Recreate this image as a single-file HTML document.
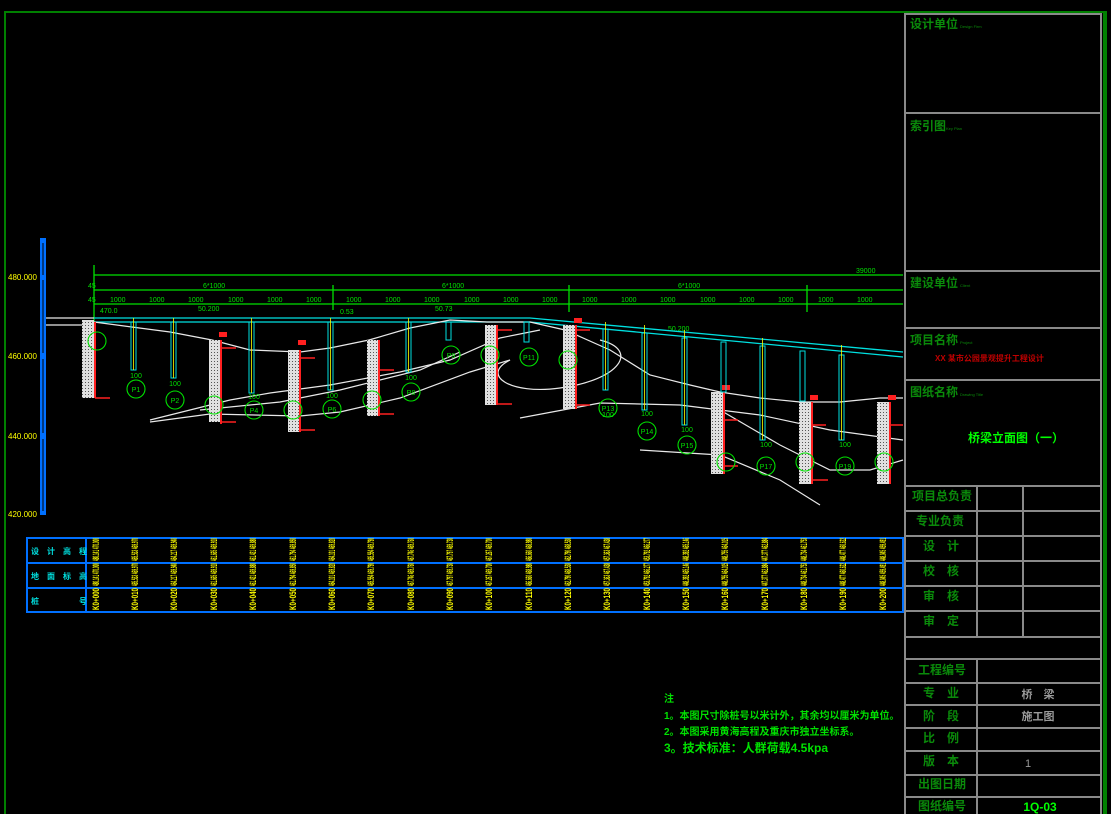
<!DOCTYPE html>
<html><head><meta charset="utf-8"><style>
html,body{margin:0;padding:0;background:#000;width:1111px;height:814px;overflow:hidden}
svg{display:block}
text{font-family:"Liberation Sans","Noto Sans CJK SC",sans-serif}
.cj{font-family:"Liberation Sans","Noto Sans CJK SC",sans-serif;font-weight:bold}
</style></head><body>
<svg width="1111" height="814" viewBox="0 0 1111 814" xmlns="http://www.w3.org/2000/svg">
<defs>
<pattern id="dots" width="3" height="3" patternUnits="userSpaceOnUse"><rect width="3" height="3" fill="#e0e0e0"/><rect x="1" y="1" width="1" height="1" fill="#555"/></pattern>
</defs>
<rect width="1111" height="814" fill="#000"/>
<path d="M5 814 V12 H1106 V814" fill="none" stroke="#008000" stroke-width="2"/>

<g stroke="#8a8a8a" stroke-width="2" fill="none">
<rect x="905" y="14" width="196" height="802"/>
<line x1="905" y1="113" x2="1101" y2="113"/>
<line x1="905" y1="271" x2="1101" y2="271"/>
<line x1="905" y1="328" x2="1101" y2="328"/>
<line x1="905" y1="380" x2="1101" y2="380"/>
<line x1="905" y1="486" x2="1101" y2="486"/>
<line x1="905" y1="511" x2="1101" y2="511"/>
<line x1="905" y1="536" x2="1101" y2="536"/>
<line x1="905" y1="561" x2="1101" y2="561"/>
<line x1="905" y1="586" x2="1101" y2="586"/>
<line x1="905" y1="611" x2="1101" y2="611"/>
<line x1="905" y1="637" x2="1101" y2="637"/>
<line x1="905" y1="659" x2="1101" y2="659"/>
<line x1="905" y1="683" x2="1101" y2="683"/>
<line x1="905" y1="705" x2="1101" y2="705"/>
<line x1="905" y1="728" x2="1101" y2="728"/>
<line x1="905" y1="751" x2="1101" y2="751"/>
<line x1="905" y1="775" x2="1101" y2="775"/>
<line x1="905" y1="797" x2="1101" y2="797"/>
<line x1="977" y1="486" x2="977" y2="637"/>
<line x1="1023" y1="486" x2="1023" y2="637"/>
<line x1="977" y1="659" x2="977" y2="814"/>
</g>
<line x1="1104" y1="12" x2="1104" y2="814" stroke="#008000" stroke-width="2"/>
<g fill="#0a8a0a" class="cj" font-size="12">
<text x="910" y="28">设计单位</text>
<text x="910" y="130">索引图</text>
<text x="910" y="287">建设单位</text>
<text x="910" y="344">项目名称</text>
<text x="910" y="396">图纸名称</text>
<text x="912" y="500">项目总负责</text>
<text x="916" y="525">专业负责</text>
<text x="923" y="550">设　计</text>
<text x="923" y="575">校　核</text>
<text x="923" y="600">审　核</text>
<text x="923" y="625">审　定</text>
<text x="918" y="674">工程编号</text>
<text x="923" y="697">专　业</text>
<text x="923" y="720">阶　段</text>
<text x="923" y="742">比　例</text>
<text x="923" y="765">版　本</text>
<text x="918" y="788">出图日期</text>
<text x="918" y="810">图纸编号</text>
</g>
<g fill="#0a8a0a" font-size="4">
<text x="960" y="28">Design Firm</text><text x="946" y="130">Key Plan</text><text x="960" y="287">Client</text><text x="960" y="344">Project</text><text x="960" y="396">Drawing Title</text>
</g>
<text x="935" y="361" fill="#c00000" font-size="8" class="cj">XX 某市公园景观提升工程设计</text>
<text x="968" y="442" fill="#00ff00" font-size="12" class="cj">桥梁立面图（一）</text>
<g fill="#9a9a9a" font-size="11" class="cj" text-anchor="middle">
<text x="1038" y="698">桥　梁</text><text x="1038" y="720">施工图</text><text x="1028" y="767" font-weight="normal">1</text>
</g>
<text x="1040" y="811" fill="#00ff00" font-size="12" font-weight="bold" text-anchor="middle">1Q-03</text>

<rect x="40" y="238" width="6" height="277" fill="#0070ff"/>
<g stroke="#000" stroke-width="1"><line x1="43" y1="243" x2="43" y2="275"/><line x1="43" y1="280" x2="43" y2="353"/><line x1="43" y1="359" x2="43" y2="433"/><line x1="43" y1="439" x2="43" y2="511"/></g>
<g fill="#ffff00" font-size="8">
<text x="8" y="280">480.000</text><text x="8" y="359">460.000</text><text x="8" y="439">440.000</text><text x="8" y="517">420.000</text>
</g>

<g stroke="#00e000" stroke-width="1.3" fill="none">
<line x1="94" y1="265" x2="94" y2="330"/>
<line x1="94" y1="275" x2="903" y2="275"/>
<line x1="94" y1="290" x2="903" y2="290"/>
<line x1="94" y1="304" x2="903" y2="304"/>
<line x1="333" y1="285" x2="333" y2="310"/>
<line x1="569" y1="285" x2="569" y2="312"/>
<line x1="807" y1="285" x2="807" y2="312"/>
</g>
<g fill="#00e000" font-size="7">
<text x="203" y="288">6*1000</text><text x="442" y="288">6*1000</text><text x="678" y="288">6*1000</text><text x="856" y="273">39000</text>
<text x="88" y="288">45</text><text x="88" y="302">45</text>
<text x="110" y="302">1000</text><text x="149" y="302">1000</text><text x="188" y="302">1000</text><text x="228" y="302">1000</text><text x="267" y="302">1000</text><text x="306" y="302">1000</text><text x="346" y="302">1000</text><text x="385" y="302">1000</text><text x="424" y="302">1000</text><text x="464" y="302">1000</text><text x="503" y="302">1000</text><text x="542" y="302">1000</text><text x="582" y="302">1000</text><text x="621" y="302">1000</text><text x="660" y="302">1000</text><text x="700" y="302">1000</text><text x="739" y="302">1000</text><text x="778" y="302">1000</text><text x="818" y="302">1000</text><text x="857" y="302">1000</text>
<text x="100" y="313">470.0</text><text x="198" y="311">50.200</text><text x="340" y="314">0.53</text><text x="435" y="311">50.73</text><text x="668" y="331">50.200</text>
</g>

<g stroke="#00e0e0" stroke-width="1.3" fill="none">
<polyline points="94,318 530,318 903,352"/>
<polyline points="94,322 530,322 903,357"/>
</g>
<g stroke="#e8e8e8" stroke-width="1.2" fill="none">
<polyline points="46,318 94,318"/><polyline points="46,325 94,325"/>
<polyline points="94,322 170,332 212,340 250,350 300,352 330,348 369,340 410,328 450,320 487,322 530,322 565,330 610,350 650,375 690,385 720,392 760,398 800,402 840,402 880,398 903,398"/>
<polyline points="150,420 190,410 230,400 270,393 330,385 400,372 450,360 500,338 540,330"/>
<polyline points="200,410 280,402 340,390 380,380 420,370 460,352"/>
<polyline points="150,422 210,414 300,416 340,412 400,398 470,372 510,360"/>
<path d="M510,360 C480,375 510,395 560,388 C620,380 640,350 600,340"/>
<polyline points="520,418 600,403 680,405 760,415 830,430 903,440"/>
<polyline points="640,450 720,455 780,480 820,505"/>
<polyline points="720,410 780,445 830,470 870,470 903,460"/>
</g>

<g fill="url(#dots)"><rect x="82" y="320" width="12" height="78"/><rect x="209" y="340" width="11" height="82"/><rect x="288" y="350" width="11" height="82"/><rect x="367" y="340" width="11" height="76"/><rect x="485" y="325" width="11" height="80"/><rect x="563" y="325" width="12" height="84"/><rect x="711" y="392" width="12" height="82"/><rect x="799" y="402" width="12" height="82"/><rect x="877" y="402" width="12" height="82"/></g>
<g stroke="#ff2020" stroke-width="2"><line x1="95" y1="322" x2="95" y2="398"/><line x1="221" y1="340" x2="221" y2="424"/><line x1="300" y1="350" x2="300" y2="432"/><line x1="379" y1="340" x2="379" y2="416"/><line x1="497" y1="325" x2="497" y2="405"/><line x1="576" y1="325" x2="576" y2="409"/><line x1="724" y1="392" x2="724" y2="474"/><line x1="812" y1="402" x2="812" y2="484"/><line x1="890" y1="402" x2="890" y2="484"/></g>
<g stroke="#ff2020" stroke-width="1.5"><line x1="95" y1="398" x2="110" y2="398"/><line x1="221" y1="348" x2="236" y2="348"/><line x1="221" y1="422" x2="236" y2="422"/><line x1="300" y1="358" x2="315" y2="358"/><line x1="300" y1="430" x2="315" y2="430"/><line x1="379" y1="370" x2="394" y2="370"/><line x1="379" y1="414" x2="394" y2="414"/><line x1="497" y1="330" x2="512" y2="330"/><line x1="497" y1="404" x2="512" y2="404"/><line x1="576" y1="330" x2="590" y2="330"/><line x1="576" y1="405" x2="590" y2="405"/><line x1="724" y1="420" x2="738" y2="420"/><line x1="724" y1="466" x2="738" y2="466"/><line x1="812" y1="425" x2="826" y2="425"/><line x1="812" y1="480" x2="828" y2="480"/><line x1="890" y1="425" x2="903" y2="425"/></g>
<g fill="#ff2020"><rect x="219" y="332" width="8" height="5"/><rect x="298" y="340" width="8" height="5"/><rect x="574" y="318" width="8" height="5"/><rect x="722" y="385" width="8" height="5"/><rect x="810" y="395" width="8" height="5"/><rect x="888" y="395" width="8" height="5"/></g>
<g stroke="#00e0e0" stroke-width="1" fill="none">
<rect x="131" y="322" width="5" height="48"/><rect x="171" y="322" width="5" height="56"/><rect x="249" y="322" width="5" height="71"/><rect x="328" y="322" width="5" height="68"/><rect x="406" y="322" width="5" height="50"/><rect x="446" y="322" width="5" height="18"/><rect x="524" y="322" width="5" height="20"/><rect x="603" y="329" width="5" height="61"/><rect x="642" y="333" width="5" height="77"/><rect x="682" y="338" width="5" height="87"/><rect x="760" y="346" width="5" height="94"/><rect x="839" y="355" width="5" height="85"/><rect x="800" y="351" width="5" height="50"/><rect x="721" y="342" width="5" height="50"/>
</g>
<g stroke="#ffff00" stroke-width="0.8"><line x1="133.5" y1="318" x2="133.5" y2="370"/><line x1="173.5" y1="318" x2="173.5" y2="378"/><line x1="251.5" y1="318" x2="251.5" y2="393"/><line x1="330.5" y1="318" x2="330.5" y2="390"/><line x1="408.5" y1="318" x2="408.5" y2="372"/><line x1="605.5" y1="322" x2="605.5" y2="390"/><line x1="644.5" y1="325" x2="644.5" y2="410"/><line x1="684.5" y1="330" x2="684.5" y2="425"/><line x1="762.5" y1="338" x2="762.5" y2="440"/><line x1="841.5" y1="345" x2="841.5" y2="440"/></g>
<g stroke="#00e000" stroke-width="1.1" fill="none">
<circle cx="97" cy="341" r="9"/><circle cx="136" cy="389" r="9"/><circle cx="175" cy="400" r="9"/><circle cx="214" cy="405" r="9"/><circle cx="254" cy="410" r="9"/><circle cx="293" cy="410" r="9"/><circle cx="332" cy="409" r="9"/><circle cx="372" cy="400" r="9"/><circle cx="411" cy="392" r="9"/><circle cx="451" cy="355" r="9"/><circle cx="490" cy="355" r="9"/><circle cx="529" cy="357" r="9"/><circle cx="568" cy="360" r="9"/><circle cx="608" cy="408" r="9"/><circle cx="647" cy="431" r="9"/><circle cx="687" cy="445" r="9"/><circle cx="726" cy="462" r="9"/><circle cx="766" cy="466" r="9"/><circle cx="805" cy="462" r="9"/><circle cx="845" cy="466" r="9"/><circle cx="884" cy="462" r="9"/>
</g>
<g fill="#00e000" font-size="7" text-anchor="middle">
<text x="136" y="392">P1</text><text x="175" y="403">P2</text><text x="254" y="413">P4</text><text x="332" y="412">P6</text><text x="411" y="395">P8</text><text x="451" y="358">P9</text><text x="529" y="360">P11</text><text x="608" y="411">P13</text><text x="647" y="434">P14</text><text x="687" y="448">P15</text><text x="766" y="469">P17</text><text x="845" y="469">P19</text>
<text x="136" y="378">100</text><text x="175" y="386">100</text><text x="254" y="399">100</text><text x="332" y="398">100</text><text x="411" y="380">100</text><text x="608" y="417">100</text><text x="647" y="416">100</text><text x="687" y="432">100</text><text x="766" y="447">100</text><text x="845" y="447">100</text>
</g>

<g stroke="#0070ff" stroke-width="2" fill="none">
<rect x="27" y="538" width="876" height="74"/>
<line x1="27" y1="563" x2="903" y2="563"/><line x1="27" y1="588" x2="903" y2="588"/>
<line x1="86" y1="538" x2="86" y2="612"/>
</g>
<g fill="#00e0e0" font-size="8" class="cj">
<text x="31" y="554">设　计　高　程</text><text x="31" y="579">地　面　标　高</text><text x="31" y="604">桩　　　　　号</text>
</g>
<g fill="#ffff00" font-size="9" font-weight="bold">
<text transform="translate(99,561) rotate(-90)" textLength="23" lengthAdjust="spacingAndGlyphs">480.141 470.000</text>
<text transform="translate(138,561) rotate(-90)" textLength="23" lengthAdjust="spacingAndGlyphs">465.533 469.970</text>
<text transform="translate(177,561) rotate(-90)" textLength="23" lengthAdjust="spacingAndGlyphs">464.217 469.940</text>
<text transform="translate(217,561) rotate(-90)" textLength="23" lengthAdjust="spacingAndGlyphs">461.665 469.910</text>
<text transform="translate(256,561) rotate(-90)" textLength="23" lengthAdjust="spacingAndGlyphs">461.431 469.880</text>
<text transform="translate(296,561) rotate(-90)" textLength="23" lengthAdjust="spacingAndGlyphs">461.794 469.850</text>
<text transform="translate(335,561) rotate(-90)" textLength="23" lengthAdjust="spacingAndGlyphs">464.101 469.820</text>
<text transform="translate(374,561) rotate(-90)" textLength="23" lengthAdjust="spacingAndGlyphs">465.554 469.790</text>
<text transform="translate(414,561) rotate(-90)" textLength="23" lengthAdjust="spacingAndGlyphs">467.746 469.760</text>
<text transform="translate(453,561) rotate(-90)" textLength="23" lengthAdjust="spacingAndGlyphs">467.797 469.730</text>
<text transform="translate(492,561) rotate(-90)" textLength="23" lengthAdjust="spacingAndGlyphs">467.267 469.700</text>
<text transform="translate(532,561) rotate(-90)" textLength="23" lengthAdjust="spacingAndGlyphs">466.660 468.980</text>
<text transform="translate(571,561) rotate(-90)" textLength="23" lengthAdjust="spacingAndGlyphs">462.790 468.530</text>
<text transform="translate(610,561) rotate(-90)" textLength="23" lengthAdjust="spacingAndGlyphs">457.363 467.438</text>
<text transform="translate(650,561) rotate(-90)" textLength="23" lengthAdjust="spacingAndGlyphs">453.792 466.277</text>
<text transform="translate(689,561) rotate(-90)" textLength="23" lengthAdjust="spacingAndGlyphs">448.392 465.146</text>
<text transform="translate(728,561) rotate(-90)" textLength="23" lengthAdjust="spacingAndGlyphs">448.755 464.015</text>
<text transform="translate(768,561) rotate(-90)" textLength="23" lengthAdjust="spacingAndGlyphs">447.377 462.884</text>
<text transform="translate(807,561) rotate(-90)" textLength="23" lengthAdjust="spacingAndGlyphs">448.734 461.753</text>
<text transform="translate(846,561) rotate(-90)" textLength="23" lengthAdjust="spacingAndGlyphs">448.477 460.622</text>
<text transform="translate(886,561) rotate(-90)" textLength="23" lengthAdjust="spacingAndGlyphs">448.045 459.491</text>

<text transform="translate(99,586) rotate(-90)" textLength="23" lengthAdjust="spacingAndGlyphs">480.141 470.000</text>
<text transform="translate(138,586) rotate(-90)" textLength="23" lengthAdjust="spacingAndGlyphs">465.533 469.970</text>
<text transform="translate(177,586) rotate(-90)" textLength="23" lengthAdjust="spacingAndGlyphs">464.217 469.940</text>
<text transform="translate(217,586) rotate(-90)" textLength="23" lengthAdjust="spacingAndGlyphs">461.665 469.910</text>
<text transform="translate(256,586) rotate(-90)" textLength="23" lengthAdjust="spacingAndGlyphs">461.431 469.880</text>
<text transform="translate(296,586) rotate(-90)" textLength="23" lengthAdjust="spacingAndGlyphs">461.794 469.850</text>
<text transform="translate(335,586) rotate(-90)" textLength="23" lengthAdjust="spacingAndGlyphs">464.101 469.820</text>
<text transform="translate(374,586) rotate(-90)" textLength="23" lengthAdjust="spacingAndGlyphs">465.554 469.790</text>
<text transform="translate(414,586) rotate(-90)" textLength="23" lengthAdjust="spacingAndGlyphs">467.746 469.760</text>
<text transform="translate(453,586) rotate(-90)" textLength="23" lengthAdjust="spacingAndGlyphs">467.797 469.730</text>
<text transform="translate(492,586) rotate(-90)" textLength="23" lengthAdjust="spacingAndGlyphs">467.267 469.700</text>
<text transform="translate(532,586) rotate(-90)" textLength="23" lengthAdjust="spacingAndGlyphs">466.660 468.980</text>
<text transform="translate(571,586) rotate(-90)" textLength="23" lengthAdjust="spacingAndGlyphs">462.790 468.530</text>
<text transform="translate(610,586) rotate(-90)" textLength="23" lengthAdjust="spacingAndGlyphs">457.363 467.438</text>
<text transform="translate(650,586) rotate(-90)" textLength="23" lengthAdjust="spacingAndGlyphs">453.792 466.277</text>
<text transform="translate(689,586) rotate(-90)" textLength="23" lengthAdjust="spacingAndGlyphs">448.392 465.146</text>
<text transform="translate(728,586) rotate(-90)" textLength="23" lengthAdjust="spacingAndGlyphs">448.755 464.015</text>
<text transform="translate(768,586) rotate(-90)" textLength="23" lengthAdjust="spacingAndGlyphs">447.377 462.884</text>
<text transform="translate(807,586) rotate(-90)" textLength="23" lengthAdjust="spacingAndGlyphs">448.734 461.753</text>
<text transform="translate(846,586) rotate(-90)" textLength="23" lengthAdjust="spacingAndGlyphs">448.477 460.622</text>
<text transform="translate(886,586) rotate(-90)" textLength="23" lengthAdjust="spacingAndGlyphs">448.045 459.491</text>

<text transform="translate(99,610) rotate(-90)" textLength="22" lengthAdjust="spacingAndGlyphs">K0+000</text>
<text transform="translate(138,610) rotate(-90)" textLength="22" lengthAdjust="spacingAndGlyphs">K0+010</text>
<text transform="translate(177,610) rotate(-90)" textLength="22" lengthAdjust="spacingAndGlyphs">K0+020</text>
<text transform="translate(217,610) rotate(-90)" textLength="22" lengthAdjust="spacingAndGlyphs">K0+030</text>
<text transform="translate(256,610) rotate(-90)" textLength="22" lengthAdjust="spacingAndGlyphs">K0+040</text>
<text transform="translate(296,610) rotate(-90)" textLength="22" lengthAdjust="spacingAndGlyphs">K0+050</text>
<text transform="translate(335,610) rotate(-90)" textLength="22" lengthAdjust="spacingAndGlyphs">K0+060</text>
<text transform="translate(374,610) rotate(-90)" textLength="22" lengthAdjust="spacingAndGlyphs">K0+070</text>
<text transform="translate(414,610) rotate(-90)" textLength="22" lengthAdjust="spacingAndGlyphs">K0+080</text>
<text transform="translate(453,610) rotate(-90)" textLength="22" lengthAdjust="spacingAndGlyphs">K0+090</text>
<text transform="translate(492,610) rotate(-90)" textLength="22" lengthAdjust="spacingAndGlyphs">K0+100</text>
<text transform="translate(532,610) rotate(-90)" textLength="22" lengthAdjust="spacingAndGlyphs">K0+110</text>
<text transform="translate(571,610) rotate(-90)" textLength="22" lengthAdjust="spacingAndGlyphs">K0+120</text>
<text transform="translate(610,610) rotate(-90)" textLength="22" lengthAdjust="spacingAndGlyphs">K0+130</text>
<text transform="translate(650,610) rotate(-90)" textLength="22" lengthAdjust="spacingAndGlyphs">K0+140</text>
<text transform="translate(689,610) rotate(-90)" textLength="22" lengthAdjust="spacingAndGlyphs">K0+150</text>
<text transform="translate(728,610) rotate(-90)" textLength="22" lengthAdjust="spacingAndGlyphs">K0+160</text>
<text transform="translate(768,610) rotate(-90)" textLength="22" lengthAdjust="spacingAndGlyphs">K0+170</text>
<text transform="translate(807,610) rotate(-90)" textLength="22" lengthAdjust="spacingAndGlyphs">K0+180</text>
<text transform="translate(846,610) rotate(-90)" textLength="22" lengthAdjust="spacingAndGlyphs">K0+190</text>
<text transform="translate(886,610) rotate(-90)" textLength="22" lengthAdjust="spacingAndGlyphs">K0+200</text>
</g>

<g fill="#00e000" font-size="10" class="cj" font-weight="normal">
<text x="664" y="702">注</text>
<text x="664" y="719">1。本图尺寸除桩号以米计外，其余均以厘米为单位。</text>
<text x="664" y="735">2。本图采用黄海高程及重庆市独立坐标系。</text>
<text x="664" y="752" font-size="12">3。技术标准：人群荷载4.5kpa</text>
</g>
</svg>
</body></html>
